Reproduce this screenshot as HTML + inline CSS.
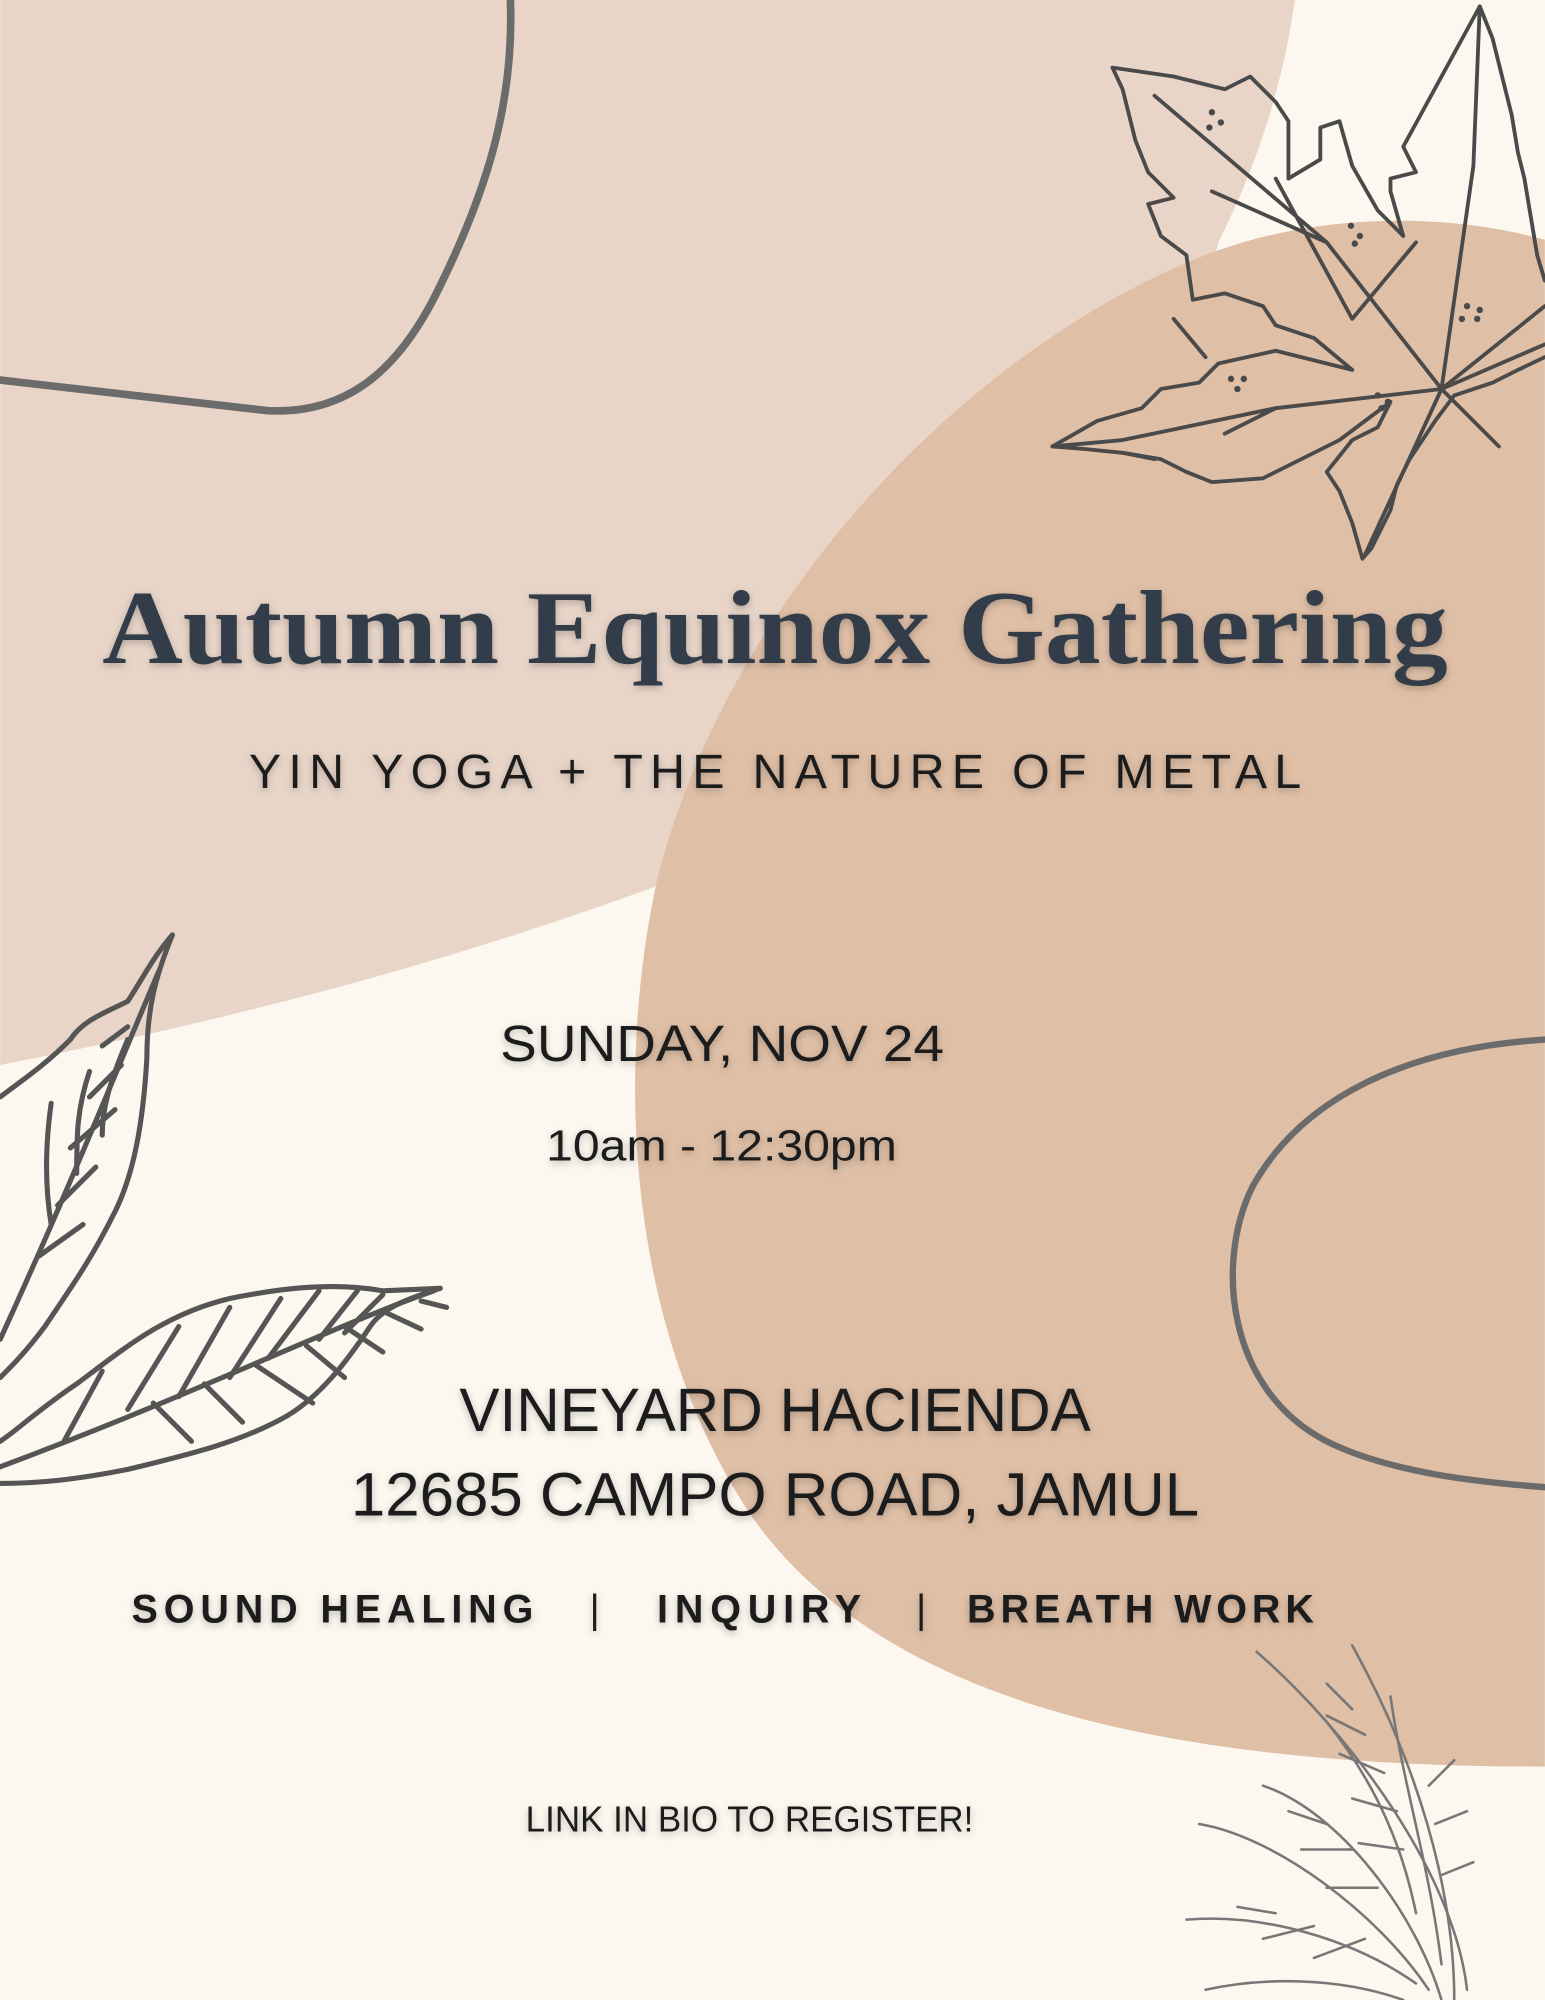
<!DOCTYPE html>
<html><head><meta charset="utf-8"><style>
html,body{margin:0;padding:0;background:#fcf8ef;}
svg{display:block;}
text{font-family:"Liberation Sans",sans-serif;fill:#1e1e1e;}
</style></head><body>
<svg width="1545" height="2000" viewBox="0 0 1211 1568" xmlns="http://www.w3.org/2000/svg">
<defs>
<filter id="sh" x="-5%" y="-30%" width="110%" height="160%"><feDropShadow dx="0" dy="2" stdDeviation="3" flood-color="#000" flood-opacity="0.25"/></filter>
</defs>
<rect width="1211" height="1568" fill="#fcf8ef"/>
<path d="M0,0 L1015,0 C1005,70 985,130 955,190 L900,400 L700,620 C450,730 230,790 0,835 Z" fill="#e8d5c8"/>
<path d="M1211,188 C1140,168 1040,165 950,198 C760,270 570,470 515,690 C480,850 495,1050 590,1190 C690,1330 900,1385 1211,1385 Z" fill="#dfbfa6"/>
<g fill="none" stroke="#6b6b6b" stroke-linecap="round">
<path d="M400,0 C403,80 382,150 342,230 C312,290 272,325 210,322 L0,298" stroke-width="6"/>
<path d="M1211,815 C1100,822 1020,862 982,930 C952,990 962,1090 1040,1130 C1090,1155 1160,1162 1211,1166" stroke-width="5"/>
</g>
<g fill="none" stroke="#4a4a4a" stroke-width="3" stroke-linejoin="round" stroke-linecap="round">
<path d="M1130,305 L1175,350"/>
<path d="M1130,305 L1040,190 L950,150 M1040,190 L905,75"/>
<path d="M1130,305 L1145,200 L1155,130 L1160,5"/>
<path d="M1130,305 L1211,240 M1130,305 L1211,270"/>
<path d="M1130,305 L1000,320 L880,345 L825,350 M1000,320 L960,340"/>
<path d="M1130,305 L1100,370 L1070,435"/>
<path d="M825,350 L860,330 L895,320 L910,305 L940,300 L955,285 L1000,275 L1060,290 L1030,265 L1000,255 L990,240 L960,230 L935,235 L930,200 L910,185 L900,160 L920,155 L900,135 L890,110 L880,70 L872,53 L920,60 L960,70 L980,60 L1000,80 L1010,95 L1010,140 L1035,125 L1035,100 L1050,95 L1060,130 L1080,165 L1100,185 L1090,150 L1090,140 L1110,135 L1100,115 L1130,60 L1160,5 L1170,30 L1180,70 L1185,90 L1190,120 L1195,140 L1200,170 L1205,200 L1211,220"/>
<path d="M1211,280 L1190,290 L1170,300 L1140,310 L1125,330 L1115,345 L1105,360 L1095,380 L1090,400 L1075,430 L1068,438 L1060,410 L1050,385 L1040,370 L1060,345 L1080,335 L1090,315 L1050,345 L1020,360 L990,375 L950,378 L930,370 L910,360 L880,355 L850,352 L825,350"/>
<path d="M880,355 L905,360 M920,250 L945,280 M1000,140 L1060,250 L1110,190"/>
</g>
<g fill="#4a4a4a">
<circle cx="1059" cy="177" r="2.5"/><circle cx="1066" cy="185" r="2.5"/><circle cx="1062" cy="191" r="2.5"/>
<circle cx="1160" cy="243" r="2.5"/><circle cx="1150" cy="240" r="2.5"/><circle cx="1158" cy="250" r="2.5"/><circle cx="1146" cy="250" r="2.5"/>
<circle cx="965" cy="297" r="2.5"/><circle cx="975" cy="297" r="2.5"/><circle cx="970" cy="305" r="2.5"/>
<circle cx="1080" cy="310" r="2.5"/><circle cx="1088" cy="315" r="2.5"/><circle cx="1083" cy="320" r="2.5"/>
<circle cx="950" cy="88" r="2.5"/><circle cx="957" cy="96" r="2.5"/><circle cx="948" cy="100" r="2.5"/>
</g>
<g fill="none" stroke="#555" stroke-width="4" stroke-linejoin="round" stroke-linecap="round">
<path d="M135,733 C120,750 110,770 100,785 C80,795 65,800 55,815 C35,835 20,845 0,860"/>
<path d="M135,733 C122,765 115,790 115,830 C112,880 105,920 90,950 C70,990 55,1010 35,1040 C20,1060 10,1070 0,1080"/>
<path d="M125,760 C95,830 55,930 0,1050"/>
<path d="M100,805 L80,820 M95,835 L70,860 M90,870 L55,900 M75,915 L45,945 M65,960 L30,985 M100,815 C85,850 80,870 80,890 M70,840 C60,870 60,890 60,920 M40,865 C35,900 35,930 40,960"/>
<path d="M345,1010 L300,1012 C260,1005 220,1010 180,1018 C130,1030 100,1055 60,1085 C30,1105 15,1120 0,1130"/>
<path d="M345,1010 C320,1018 300,1025 290,1040 C270,1070 250,1095 225,1110 C190,1130 150,1140 100,1152 C60,1160 30,1163 0,1163"/>
<path d="M340,1012 C260,1040 160,1090 0,1150"/>
<path d="M330,1020 L350,1025 M300,1028 L330,1042 M270,1040 L300,1060 M240,1055 L270,1080 M200,1070 L245,1100 M160,1085 L190,1115 M120,1100 L150,1130 M300,1015 L270,1045 M280,1012 L250,1050 M250,1012 L210,1065 M220,1018 L180,1080 M180,1025 L140,1095 M140,1040 L100,1105 M80,1075 L50,1130"/>
</g>
<g fill="none" stroke="#777" stroke-width="2" stroke-linecap="round">
<path d="M1140,1568 C1140,1480 1110,1380 1060,1290"/>
<path d="M1150,1560 C1140,1470 1060,1360 985,1295"/>
<path d="M1130,1568 C1110,1500 1050,1420 990,1400"/>
<path d="M1120,1560 C1080,1500 1000,1440 940,1430"/>
<path d="M1110,1555 C1060,1520 990,1500 930,1505"/>
<path d="M1100,1568 C1050,1550 990,1550 945,1560"/>
<path d="M1130,1540 C1120,1460 1100,1400 1090,1330"/>
<path d="M1060,1340 L1040,1320 M1070,1360 L1040,1345 M1085,1390 L1050,1375 M1095,1420 L1060,1410 M1100,1450 L1065,1445 M1040,1430 L1010,1420 M1060,1450 L1020,1450 M1080,1480 L1040,1480 M1000,1500 L970,1495 M1030,1510 L990,1520 M1070,1520 L1030,1535 M1120,1400 L1140,1380 M1125,1430 L1150,1420 M1130,1470 L1155,1460 M1040,1350 C1080,1400 1100,1450 1110,1500"/>
</g>
<g filter="url(#sh)">
<text x="80" y="520" font-size="82" font-weight="bold" textLength="1055" lengthAdjust="spacingAndGlyphs" style="font-family:'Liberation Serif',serif;fill:#333c48">Autumn Equinox Gathering</text>
<text x="195" y="618" font-size="38" textLength="825" lengthAdjust="spacing">YIN YOGA + THE NATURE OF METAL</text>
<text x="392" y="832" font-size="40" textLength="348" lengthAdjust="spacingAndGlyphs">SUNDAY, NOV 24</text>
<text x="428" y="910" font-size="34" textLength="275" lengthAdjust="spacingAndGlyphs">10am - 12:30pm</text>
<text x="360" y="1122" font-size="48" textLength="495" lengthAdjust="spacingAndGlyphs">VINEYARD HACIENDA</text>
<text x="275" y="1188" font-size="48" textLength="665" lengthAdjust="spacingAndGlyphs">12685 CAMPO ROAD, JAMUL</text>
<text x="103" y="1272" font-size="31" font-weight="bold" textLength="315" lengthAdjust="spacing">SOUND HEALING</text>
<text x="462" y="1272" font-size="31">|</text>
<text x="515" y="1272" font-size="31" font-weight="bold" textLength="160" lengthAdjust="spacing">INQUIRY</text>
<text x="718" y="1272" font-size="31">|</text>
<text x="758" y="1272" font-size="31" font-weight="bold" textLength="272" lengthAdjust="spacing">BREATH WORK</text>
<text x="412" y="1436" font-size="28" textLength="351" lengthAdjust="spacingAndGlyphs">LINK IN BIO TO REGISTER!</text>
</g>
</svg>
</body></html>
